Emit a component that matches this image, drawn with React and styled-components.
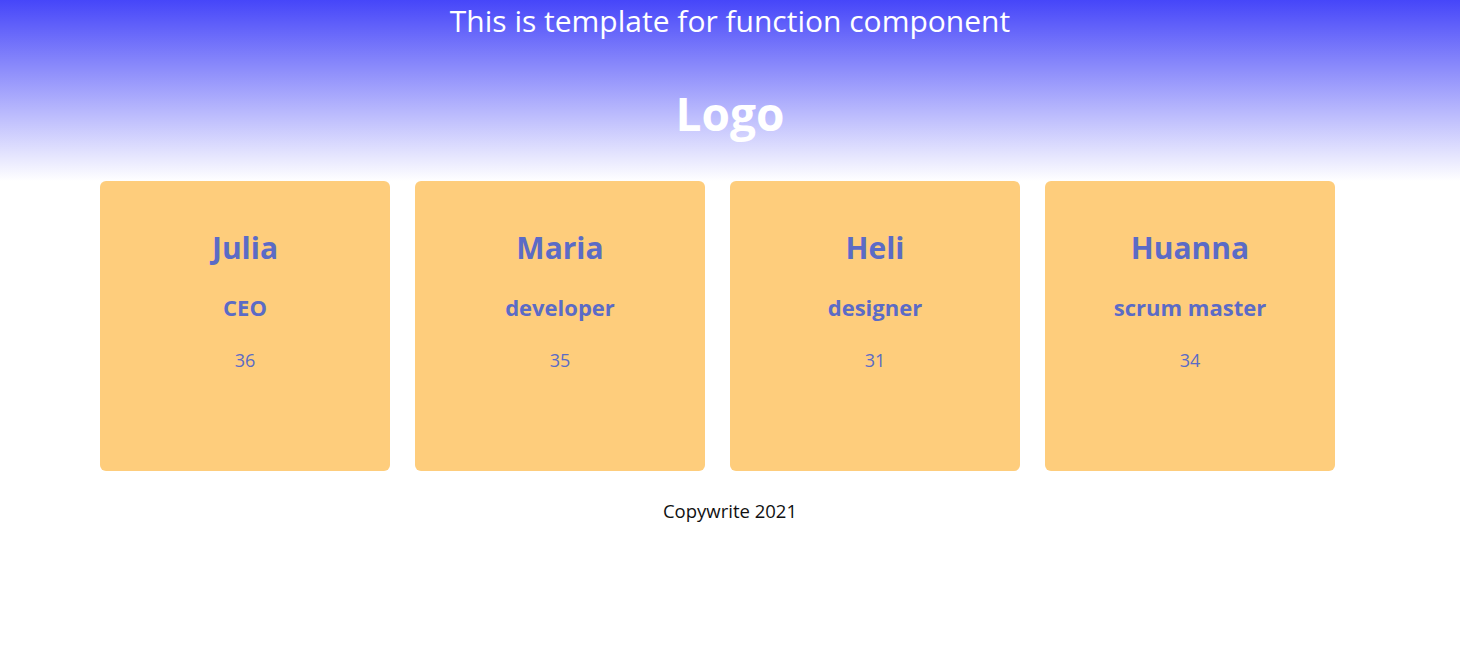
import React from 'react'
import styled, { createGlobalStyle } from 'styled-components'

const GlobalStyle = createGlobalStyle`
  body {
    margin: 0;
    background: #ffffff;
    font-family: "Open Sans", "Noto Sans", sans-serif;
  }
`;

const Page = styled.div`
  width: 1460px;
  display: flex;
  flex-direction: column;
`;

const Header = styled.header`
  height: 181px;
  display: flex;
  flex-direction: column;
  align-items: center;
  background: linear-gradient(180deg, #4646f9 0%, #ffffff 100%);
  color: #ffffff;
`;

const Title = styled.h1`
  margin: 0;
  padding-top: 1px;
  font-size: 30px;
  font-weight: 400;
  line-height: 40px;
`;

const Logo = styled.div`
  margin-top: 42px;
  font-size: 46px;
  font-weight: 700;
  line-height: 60px;
`;

const CardRow = styled.div`
  display: flex;
  gap: 25px;
  padding-left: 100px;
`;

const Card = styled.div`
  width: 290px;
  height: 290px;
  border-radius: 6px;
  background: #fecd7c;
  color: #5b6bc6;
  display: flex;
  flex-direction: column;
  align-items: center;
  padding-top: 47px;
  box-sizing: border-box;
`;

const Name = styled.h2`
  margin: 0;
  font-size: 30px;
  font-weight: 700;
  line-height: 40px;
`;

const Role = styled.h3`
  margin: 24px 0 0;
  font-size: 22px;
  font-weight: 700;
  line-height: 30px;
`;

const Age = styled.p`
  margin: 26px 0 0;
  font-size: 18px;
  line-height: 24px;
`;

const Footer = styled.footer`
  margin-top: 28px;
  text-align: center;
  font-size: 18.5px;
  line-height: 24px;
  color: #111111;
`;

const people = [
  { name: 'Julia', role: 'CEO', age: 36 },
  { name: 'Maria', role: 'developer', age: 35 },
  { name: 'Heli', role: 'designer', age: 31 },
  { name: 'Huanna', role: 'scrum master', age: 34 },
];

function App() {
  return (
    <Page>
      <GlobalStyle />
      <Header>
        <Title>This is template for function component</Title>
        <Logo>Logo</Logo>
      </Header>
      <CardRow>
        {people.map((p) => (
          <Card key={p.name}>
            <Name>{p.name}</Name>
            <Role>{p.role}</Role>
            <Age>{p.age}</Age>
          </Card>
        ))}
      </CardRow>
      <Footer>Copywrite 2021</Footer>
    </Page>
  )
}

export default App
